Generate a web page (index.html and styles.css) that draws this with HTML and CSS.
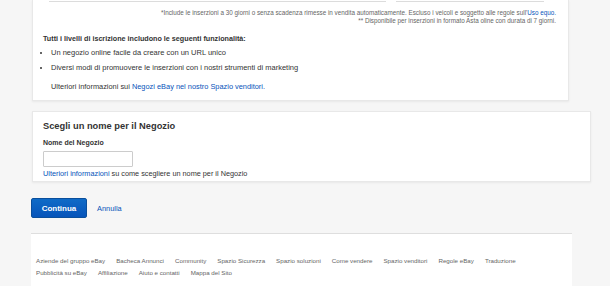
FILE: index.html
```html
<!DOCTYPE html>
<html lang="it">
<head>
  <meta charset="UTF-8">
  <meta name="viewport" content="width=device-width, initial-scale=1.0">
  <title>Crea il tuo Negozio eBay</title>
  <link rel="stylesheet" href="styles.css">
</head>
<body>
  <div class="page">
    <div class="card levels">
      <div class="plans">
        <div class="plan wide"></div>
        <div class="plan"></div>
      </div>

      <div class="notes">
        <p>*Include le inserzioni a 30 giorni o senza scadenza rimesse in vendita automaticamente. Escluso i veicoli e soggetto alle regole sull'<a href="#">Uso equo.</a></p>
        <p>** Disponibile per inserzioni in formato Asta oline con durata di 7 giorni.</p>
      </div>

      <h4>Tutti i livelli di iscrizione includono le seguenti funzionalità:</h4>
      <ul class="features">
        <li>Un negozio online facile da creare con un URL unico</li>
        <li>Diversi modi di promuovere le inserzioni con i nostri strumenti di marketing</li>
      </ul>
      <p class="more">Ulteriori informazioni sui <a href="#">Negozi eBay nel nostro Spazio venditori.</a></p>
    </div>

    <div class="card naming">
      <h2>Scegli un nome per il Negozio</h2>
      <label for="storeName">Nome del Negozio</label>
      <input type="text" id="storeName">
      <p class="hint"><a href="#">Ulteriori informazioni</a> su come scegliere un nome per il Negozio</p>
    </div>

    <div class="actions">
      <button class="primary">Continua</button>
      <a href="#" class="cancel">Annulla</a>
    </div>

    <div class="footer">
      <ul>
        <li><a href="#">Aziende del gruppo eBay</a></li>
        <li><a href="#">Bacheca Annunci</a></li>
        <li><a href="#">Community</a></li>
        <li><a href="#">Spazio Sicurezza</a></li>
        <li><a href="#">Spazio soluzioni</a></li>
        <li><a href="#">Come vendere</a></li>
        <li><a href="#">Spazio venditori</a></li>
        <li><a href="#">Regole eBay</a></li>
        <li><a href="#">Traduzione</a></li>
      </ul>
      <ul>
        <li><a href="#">Pubblicità su eBay</a></li>
        <li><a href="#">Affiliazione</a></li>
        <li><a href="#">Aiuto e contatti</a></li>
        <li><a href="#">Mappa del Sito</a></li>
      </ul>
    </div>
  </div>
</body>
</html>
```

FILE: styles.css
```css
body {
  font-family: "Liberation Sans", Arial, sans-serif;
  color: #333;
  margin: 0;
  padding: 0;
  background-color: #f6f6f6;
}

a {
  color: #0654ba;
  text-decoration: none;
}

p {
  margin: 0;
}

.page {
  width: 541px;
  margin-left: 31px;
}

.card {
  margin-left: 1px;
  width: 537px;
  background: #fff;
  border: 1px solid #e8e8e8;
  box-shadow: 0 1px 2px rgba(0, 0, 0, 0.06);
}

/* bottom of the plan table, scrolled off the top */
.levels {
  border-top: none;
  height: 101px;
  padding: 0 10px;
  box-sizing: border-box;
}

.plans {
  display: flex;
  gap: 10px;
  padding: 0 14px 0 6px;
}

.plan {
  flex: 1;
  height: 1px;
  border-bottom: 1px solid #dcdcdc;
}

.plan.wide {
  flex: 0 0 337px;
}

.notes {
  margin-top: 7px;
  padding-right: 2px;
  text-align: right;
  font-size: 6.3px;
  line-height: 8px;
  color: #666;
  white-space: nowrap;
}

.levels h4 {
  margin: 9px 0 0;
  font-size: 7.2px;
  line-height: 10px;
}

.features {
  margin: 1px 0 0;
  padding-left: 8px;
  font-size: 7.5px;
  line-height: 15px;
}

.more {
  margin-top: 7px;
  padding-left: 8px;
  font-size: 7.4px;
  line-height: 10px;
}

.naming {
  margin-top: 10px;
  padding: 8px 10px 2px;
}

.naming h2 {
  margin: 0;
  font-size: 9.3px;
  line-height: 12px;
}

.naming label {
  display: block;
  margin-top: 6px;
  font-size: 7px;
  font-weight: bold;
  line-height: 9px;
}

.naming input {
  display: block;
  margin: 4px 0 0;
  width: 90px;
  height: 16px;
  padding: 0;
  box-sizing: border-box;
  border: 1px solid #ccc;
  border-radius: 1px;
}

.hint {
  margin-top: 1px;
  font-size: 7.3px;
  line-height: 11px;
}

.actions {
  display: flex;
  align-items: center;
  gap: 10px;
  margin-top: 16px;
}

.primary {
  width: 56px;
  height: 20px;
  padding: 0;
  font-family: inherit;
  font-size: 8px;
  font-weight: bold;
  color: #fff;
  border: 1px solid #0a4f9c;
  border-radius: 2px;
  background: linear-gradient(#0f6bc7, #0654ba);
  cursor: pointer;
}

.cancel {
  font-size: 7.4px;
}

.footer {
  margin-top: 15px;
  height: 60px;
  background: #fff;
  border-top: 1px solid #dedede;
  padding: 21px 5px 0;
  box-sizing: border-box;
}

.footer ul {
  display: flex;
  gap: 11px;
  margin: 0;
  padding: 0;
  list-style: none;
  font-size: 6.2px;
  line-height: 12px;
}

.footer a {
  color: #666;
}
```
